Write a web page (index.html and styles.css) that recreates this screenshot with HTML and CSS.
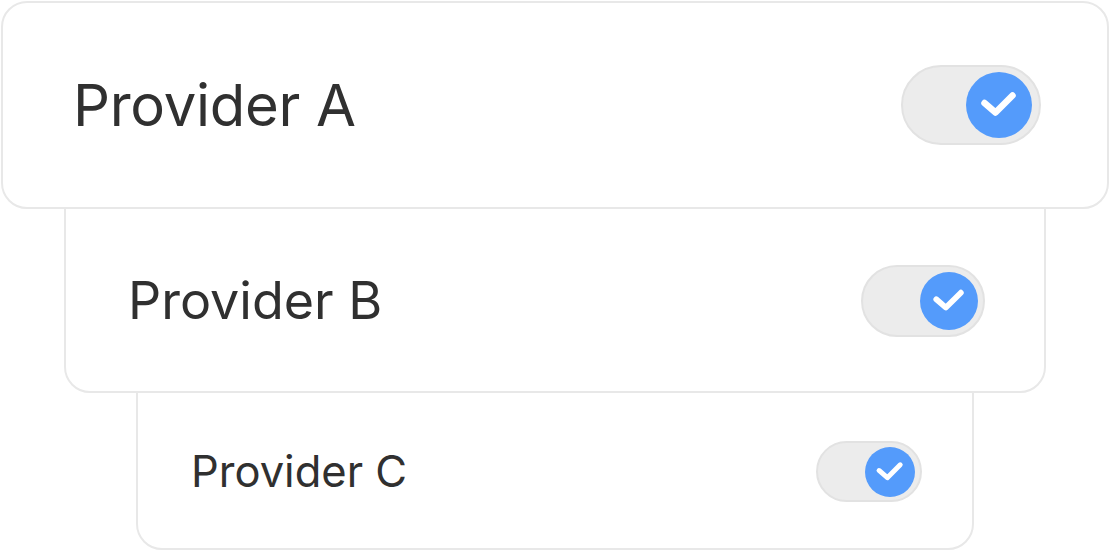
FILE: index.html
```html
<!DOCTYPE html>
<html lang="en">
<head>
<meta charset="utf-8">
<title>Providers</title>
<link rel="stylesheet" href="styles.css">
</head>
<body>
<div class="stack">
  <div class="card card-a">
    <span class="label">Provider A</span>
    <div class="toggle">
      <div class="knob">
        <svg viewBox="0 0 66 66"><polyline points="18.5,31 29.5,40.5 46.5,23.5" /></svg>
      </div>
    </div>
  </div>
  <div class="card card-b">
    <span class="label">Provider B</span>
    <div class="toggle">
      <div class="knob">
        <svg viewBox="0 0 66 66"><polyline points="18.5,31 29.5,40.5 46.5,23.5" /></svg>
      </div>
    </div>
  </div>
  <div class="card card-c">
    <span class="label">Provider C</span>
    <div class="toggle">
      <div class="knob">
        <svg viewBox="0 0 66 66"><polyline points="18.5,31 29.5,40.5 46.5,23.5" /></svg>
      </div>
    </div>
  </div>
</div>
</body>
</html>
```
FILE: styles.css
```css
html, body {
  margin: 0;
  padding: 0;
  background: #ffffff;
}
body {
  font-family: Inter, "Noto Sans", sans-serif;
  color: #303030;
}
.stack {
  display: flex;
  flex-direction: column;
  align-items: center;
  padding-top: 1px;
}
.card {
  box-sizing: border-box;
  background: #ffffff;
  border: 2px solid #e8e8e8;
  border-radius: 26px;
  display: flex;
  align-items: center;
  justify-content: space-between;
  position: relative;
}
.card-a {
  width: 1108px;
  height: 208px;
  padding: 0 66px 0 70px;
  z-index: 3;
}
.card-b {
  width: 982px;
  height: 214px;
  margin-top: -30px;
  padding: 30px 59px 0 62px;
  z-index: 2;
}
.card-c {
  width: 838px;
  height: 187px;
  margin-top: -30px;
  padding: 30px 50px 0 53px;
  z-index: 1;
}
.label {
  font-weight: 400;
  line-height: 1;
  white-space: nowrap;
}
.card-a .label { font-size: 58px; letter-spacing: -0.3px; }
.card-b .label { font-size: 52px; }
.card-c .label { font-size: 43.5px; }

.toggle {
  box-sizing: border-box;
  background: #ececec;
  border: 2px solid #e2e2e2;
  border-radius: 999px;
  display: flex;
  align-items: center;
  justify-content: flex-end;
}
.card-a .toggle { width: 140px; height: 80px; padding-right: 7px; }
.card-b .toggle { width: 124px; height: 72px; padding-right: 5px; }
.card-c .toggle { width: 106px; height: 61px; padding-right: 5px; }

.knob {
  background: #549bfb;
  border-radius: 50%;
  display: flex;
}
.card-a .knob { width: 66px; height: 66px; }
.card-b .knob { width: 58px; height: 58px; }
.card-c .knob { width: 50px; height: 50px; }

.knob svg {
  width: 100%;
  height: 100%;
}
.knob polyline {
  fill: none;
  stroke: #ffffff;
  stroke-width: 6.5;
  stroke-linecap: round;
  stroke-linejoin: round;
}
```
